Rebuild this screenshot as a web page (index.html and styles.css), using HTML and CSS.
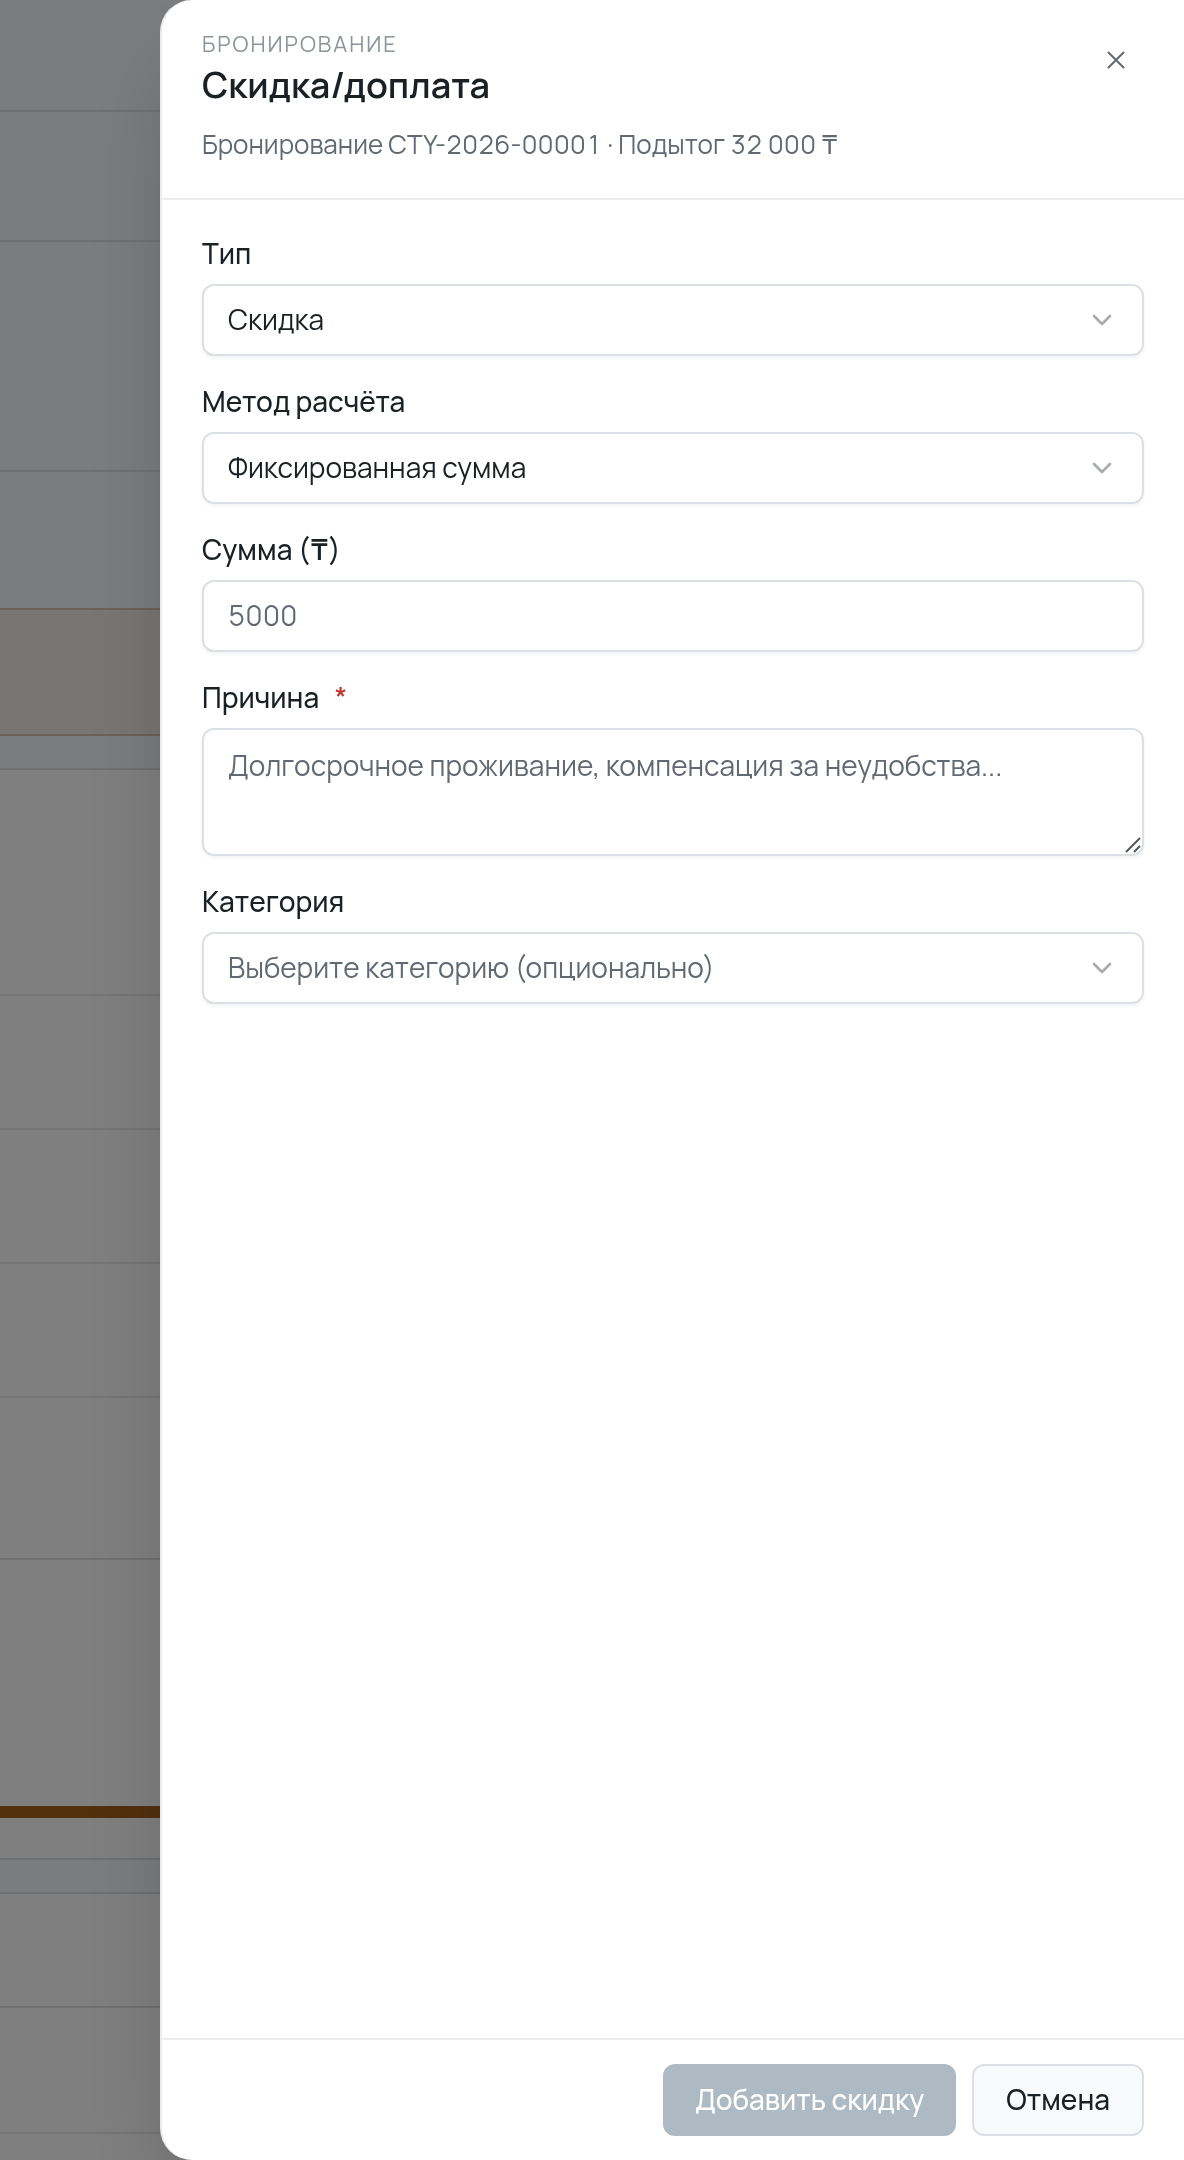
FILE: index.html
```html
<!DOCTYPE html>
<html lang="ru">
<head>
  <meta charset="utf-8">
  <meta name="viewport" content="width=device-width, initial-scale=1">
  <title>Скидка/доплата</title>
  <link rel="stylesheet" href="styles.css">
</head>
<body>
  <div class="page" aria-hidden="true">
    <div class="band band-top"></div>
    <div class="band band-toolbar"></div>
    <div class="band band-summary"></div>
    <div class="band band-tabs"></div>
    <div class="band band-notice"></div>
    <div class="band band-head"></div>
    <div class="band band-first"></div>
    <div class="band band-row"></div>
    <div class="band band-row"></div>
    <div class="band band-row"></div>
    <div class="band band-total"></div>
    <div class="band band-chart"></div>
    <div class="band band-accent"></div>
    <div class="band band-space"></div>
    <div class="band band-strip"></div>
    <div class="band band-item"></div>
    <div class="band band-last"></div>
  </div>

  <div class="overlay">
    <section class="drawer" role="dialog" aria-modal="true" aria-labelledby="drawer-title">
      <header class="drawer-header">
        <div class="heading">
          <p class="eyebrow">БРОНИРОВАНИЕ</p>
          <h1 class="title" id="drawer-title">Скидка/доплата</h1>
          <p class="subtitle">Бронирование CTY-2026-00001 · Подытог 32 000 ₸</p>
        </div>
        <button class="close" type="button" aria-label="Закрыть">
          <svg class="close-icon" viewBox="0 0 28 28" aria-hidden="true"><path d="M6.5 6.500l15 15M21.500 6.500l-15 15"/></svg>
        </button>
      </header>

      <form class="drawer-body" id="adjustment">
        <div class="field">
          <label class="label" for="type">Тип</label>
          <div class="box">
            <select class="control" id="type"><option>Скидка</option><option>Доплата</option></select>
            <svg class="chevron" viewBox="0 0 24 24" aria-hidden="true"><path d="M6 9l6 6 6-6"/></svg>
          </div>
        </div>
        <div class="field">
          <label class="label" for="method">Метод расчёта</label>
          <div class="box">
            <select class="control" id="method"><option>Фиксированная сумма</option><option>Процент</option></select>
            <svg class="chevron" viewBox="0 0 24 24" aria-hidden="true"><path d="M6 9l6 6 6-6"/></svg>
          </div>
        </div>
        <div class="field">
          <label class="label" for="amount">Сумма (₸)</label>
          <input class="control" id="amount" type="text" inputmode="numeric" placeholder="5000">
        </div>
        <div class="field">
          <label class="label" for="reason">Причина <span class="required">*</span></label>
          <div class="box">
            <textarea class="control control-area" id="reason" placeholder="Долгосрочное проживание, компенсация за неудобства..."></textarea>
            <svg class="grip" viewBox="0 0 16 16" aria-hidden="true"><path d="M1 15L15 1M9 15l6-6"/></svg>
          </div>
        </div>
        <div class="field">
          <label class="label" for="category">Категория</label>
          <div class="box">
            <select class="control control-empty" id="category"><option>Выберите категорию (опционально)</option></select>
            <svg class="chevron" viewBox="0 0 24 24" aria-hidden="true"><path d="M6 9l6 6 6-6"/></svg>
          </div>
        </div>
      </form>

      <footer class="drawer-footer">
        <button class="button button-primary" type="submit" form="adjustment" disabled>Добавить скидку</button>
        <button class="button button-secondary" type="button">Отмена</button>
      </footer>
    </section>
  </div>
</body>
</html>
```

FILE: styles.css
```css
*, *::before, *::after { box-sizing: border-box; }

body {
  margin: 0;
  font-family: Manrope, Inter, "Noto Sans", sans-serif;
  font-size: 28px;
  line-height: 40px;
  font-variant-numeric: tabular-nums;
  color: #1b2024;
  background: #fff;
}

/* Page behind the drawer */
.page {
  display: flex;
  flex-direction: column;
  height: 100vh;
  overflow: hidden;
}
.band { flex: none; border-bottom: 2px solid #dcdfe3; }
.band-top { height: 112px; background: #f7f9fb; }
.band-toolbar { height: 130px; background: #f7f9fb; }
.band-summary { height: 230px; background: #f7f9fb; }
.band-tabs { height: 138px; background: #f7f9fb; border-color: #dcc2aa; }
.band-notice { height: 126px; background: #f0ebe6; border-color: #dcc2aa; }
.band-head { height: 34px; background: #f7f9fb; }
.band-first { height: 226px; border-color: #e8e8e9; }
.band-row { height: 134px; border-color: #e8e8e9; }
.band-total { height: 162px; }
.band-chart { height: 246px; border: 0; }
.band-accent { height: 12px; border: 0; background: #a36019; }
.band-space { height: 42px; }
.band-strip { height: 34px; background: #f7f9fb; }
.band-item { height: 114px; }
.band-last { height: 126px; border-color: #e8e8e9; }

/* Drawer */
.overlay {
  position: fixed;
  inset: 0;
  display: flex;
  padding-left: 160px;
  background: rgba(0, 0, 0, 0.5);
}
.drawer {
  flex: 1;
  min-width: 0;
  display: flex;
  flex-direction: column;
  background: #fff;
  border-left: 2px solid #ebecec;
  border-radius: 32px 0 0 32px;
  box-shadow: 0 50px 100px -24px rgba(0, 0, 0, 0.25);
}
.drawer-header {
  display: flex;
  justify-content: space-between;
  align-items: flex-start;
  padding: 28px 40px 34px;
  border-bottom: 2px solid #ececed;
}
.eyebrow, .title, .subtitle { margin: 0; }
.eyebrow {
  font-size: 22px;
  line-height: 32px;
  letter-spacing: 2px;
  color: #8e949c;
}
.title {
  font-size: 36px;
  line-height: 50px;
  font-weight: 600;
}
.subtitle {
  margin-top: 14px;
  font-size: 26px;
  color: #626973;
}
.close {
  display: grid;
  place-items: center;
  width: 56px;
  height: 56px;
  margin-top: 4px;
  padding: 0;
  border: 0;
  background: none;
  color: #626973;
}
.close-icon { width: 28px; height: 28px; }
.close-icon path {
  fill: none;
  stroke: currentColor;
  stroke-width: 2;
  stroke-linecap: round;
}

.drawer-body {
  flex: 1;
  min-height: 0;
  display: flex;
  flex-direction: column;
  gap: 24px;
  padding: 32px 40px;
  overflow: auto;
}
.field {
  display: flex;
  flex-direction: column;
  gap: 10px;
}
.label {
  line-height: 42px;
  font-weight: 500;
}
.required { margin-left: 10px; color: #c0332f; }
.control {
  display: block;
  width: 100%;
  height: 72px;
  margin: 0;
  padding: 13px 24px 15px;
  font: inherit;
  font-variant-numeric: inherit;
  color: inherit;
  background: #fff;
  border: 2px solid #dce0e4;
  border-radius: 12px;
  box-shadow: 0 2px 4px rgba(0, 0, 0, 0.05);
  appearance: none;
}
.control::placeholder { color: #626973; opacity: 1; }
.control-empty { color: #626973; }
.control-area {
  height: 128px;
  padding-top: 15px;
  resize: vertical;
}
.control-area::-webkit-resizer { background: transparent; }
.box { display: grid; align-items: center; }
.box > * { grid-area: 1 / 1; }
.chevron {
  justify-self: end;
  width: 32px;
  height: 32px;
  margin-right: 26px;
  pointer-events: none;
}
.chevron path {
  fill: none;
  stroke: #a9acaf;
  stroke-width: 2;
  stroke-linecap: round;
  stroke-linejoin: round;
}
.grip {
  place-self: end;
  width: 16px;
  height: 16px;
  margin: 0 3px 3px 0;
  pointer-events: none;
}
.grip path { fill: none; stroke: #55585a; stroke-width: 2; }

.drawer-footer {
  display: flex;
  justify-content: flex-end;
  gap: 16px;
  padding: 24px 40px;
  border-top: 2px solid #ececed;
}
.button {
  height: 72px;
  padding: 0 32px 2px;
  font: inherit;
  font-weight: 500;
  border: 0;
  border-radius: 12px;
}
.button-primary { color: #fff; background: #adb9c3; }
.button-secondary {
  color: #1b2024;
  background: #f9fafc;
  border: 2px solid #dce0e4;
}
```
